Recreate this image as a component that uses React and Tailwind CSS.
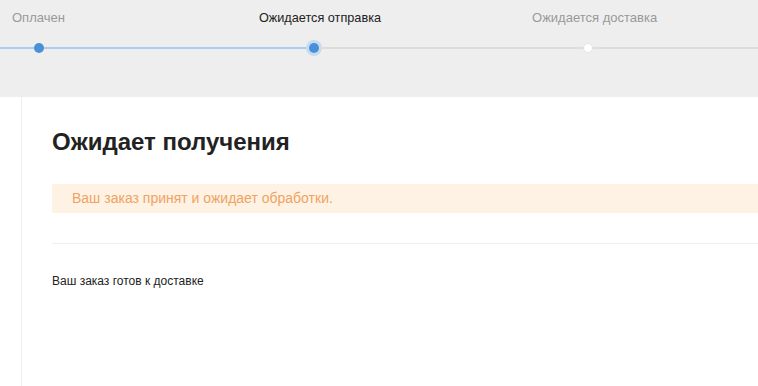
export default function App() {
  return (
    <div className="w-[758px] h-[386px] overflow-hidden bg-white" style={{ fontFamily: '"Liberation Sans", Arial, sans-serif' }}>
      <div className="h-[97px] bg-[#eeeeee] pt-[10px]">
        <div className="flex items-center h-[16px] text-[13px] leading-[16px]">
          <span className="ml-[12px] text-[#999999]">Оплачен</span>
          <span className="ml-[194px] text-[#222222] text-[12.7px]">Ожидается отправка</span>
          <span className="ml-[151px] text-[#999999]">Ожидается доставка</span>
        </div>
        <div className="mt-[16px] flex items-center h-[12px]">
          <div className="w-[34px] h-[2px] bg-[#aacdef]" />
          <div className="w-[10px] h-[10px] rounded-full bg-[#4a90d9] shrink-0" />
          <div className="w-[265px] h-[2px] bg-[#aacdef]" />
          <div className="w-[10px] h-[10px] rounded-full bg-[#4a90d9] shrink-0 ring-[3px] ring-[#c5dcf3]" />
          <div className="w-[264px] h-[2px] bg-[#dcdcdc]" />
          <div className="w-[10px] h-[10px] rounded-full bg-white shrink-0 border border-[#e4e4e4]" />
          <div className="flex-1 h-[2px] bg-[#dcdcdc]" />
        </div>
      </div>
      <div className="flex h-[289px]">
        <div className="w-[21px] shrink-0" />
        <div className="w-px bg-[#eeeeee] shrink-0" />
        <div className="flex-1 pl-[30px]">
          <h1 className="mt-[30px] text-[24px] leading-[30px] font-bold text-[#222222]">Ожидает получения</h1>
          <div className="mt-[27px] h-[29px] bg-[#fef2e4] pl-[20px] flex items-center text-[14px] text-[#f0a263]">
            Ваш заказ принят и ожидает обработки.
          </div>
          <div className="mt-[30px] h-px bg-[#eeeeee]" />
          <p className="mt-[29px] text-[12px] leading-[16px] text-[#222222]">Ваш заказ готов к доставке</p>
        </div>
      </div>
    </div>
  );
}
